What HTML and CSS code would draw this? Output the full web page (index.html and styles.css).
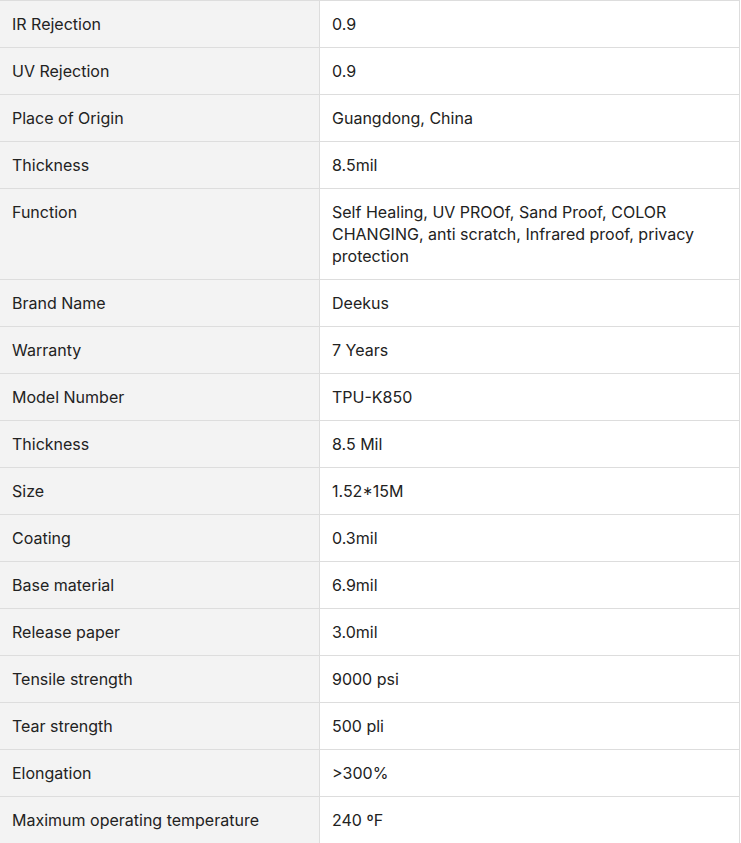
FILE: index.html
```html
<!DOCTYPE html>
<html>
<head>
<meta charset="utf-8">
<link rel="stylesheet" href="styles.css">
</head>
<body>
<table class="spec">
<tbody>
<tr><td class="k">IR Rejection</td><td class="v">0.9</td></tr>
<tr><td class="k">UV Rejection</td><td class="v">0.9</td></tr>
<tr><td class="k">Place of Origin</td><td class="v">Guangdong, China</td></tr>
<tr><td class="k">Thickness</td><td class="v">8.5mil</td></tr>
<tr><td class="k">Function</td><td class="v">Self Healing, UV PROOf, Sand Proof, COLOR CHANGING, anti scratch, Infrared proof, privacy protection</td></tr>
<tr><td class="k">Brand Name</td><td class="v">Deekus</td></tr>
<tr><td class="k">Warranty</td><td class="v">7 Years</td></tr>
<tr><td class="k">Model Number</td><td class="v">TPU-K850</td></tr>
<tr><td class="k">Thickness</td><td class="v">8.5 Mil</td></tr>
<tr><td class="k">Size</td><td class="v">1.52*15M</td></tr>
<tr><td class="k">Coating</td><td class="v">0.3mil</td></tr>
<tr><td class="k">Base material</td><td class="v">6.9mil</td></tr>
<tr><td class="k">Release paper</td><td class="v">3.0mil</td></tr>
<tr><td class="k">Tensile strength</td><td class="v">9000 psi</td></tr>
<tr><td class="k">Tear strength</td><td class="v">500 pli</td></tr>
<tr><td class="k">Elongation</td><td class="v">&gt;300%</td></tr>
<tr><td class="k">Maximum operating temperature</td><td class="v">240 ºF</td></tr>
</tbody>
</table>
</body>
</html>
```
FILE: styles.css
```css
html, body {
  margin: 0;
  padding: 0;
  background: #ffffff;
}
body {
  font-family: Inter, "Liberation Sans", sans-serif;
  font-size: 16px;
  color: #222222;
}
.spec {
  border-collapse: collapse;
  width: 741px;
  margin-left: -1px;
  table-layout: fixed;
}
.spec td {
  border: 1px solid #dddddd;
  padding: 12px 12px;
  line-height: 22px;
  vertical-align: top;
  text-align: left;
}
.spec .k {
  width: 295px;
  background: #f3f3f3;
}
.spec .v {
  background: #ffffff;
}
```
